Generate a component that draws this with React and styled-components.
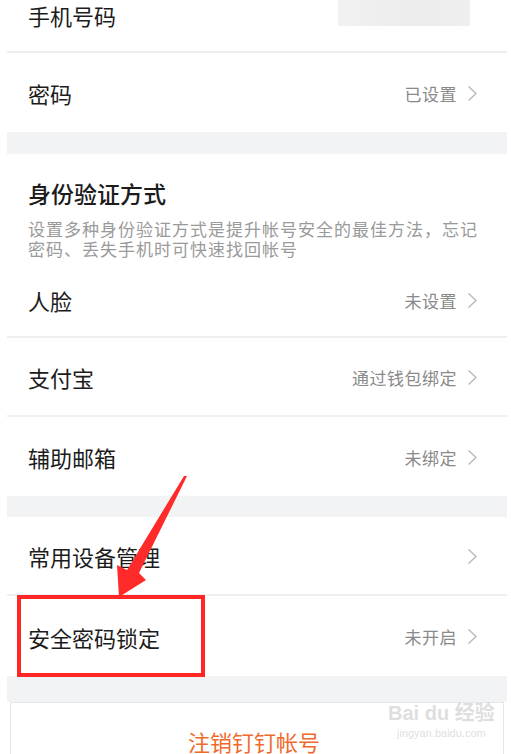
import React from 'react';
import styled, { createGlobalStyle } from 'styled-components';

const GlobalStyle = createGlobalStyle`
    html, body {
        margin: 0;
        padding: 0;
        background: #fff;
        font-family: "Noto Sans CJK SC", "Noto Sans", sans-serif;
        overflow: hidden;
    }
`;

const Screen = styled.div`
    position: relative;
    width: 511px;
    height: 754px;
    overflow: hidden;
    background: #fff;
`;

const Page = styled.div`
    margin-left: 7px;
    width: 500px;
`;

const Group = styled.section`
    background: #fff;
`;

const Band = styled.div`
    height: ${p => p.h || 22}px;
    background: #f2f3f5;
`;

const Row = styled.div`
    display: flex;
    align-items: ${p => (p.top ? 'flex-start' : 'center')};
    justify-content: space-between;
    height: ${p => p.h || 79}px;
    box-sizing: border-box;
    padding: ${p => (p.top ? '0' : '1px')} 29px 0 21px;
    border-bottom: ${p => (p.last ? 'none' : '2px solid #efefef')};
`;

const Label = styled.span`
    font-size: 22px;
    line-height: 30px;
    color: #1c1c1c;
`;

const Value = styled.span`
    display: flex;
    align-items: center;
    gap: 10px;
    font-size: 17px;
    letter-spacing: 0.5px;
    color: #8a8a8a;
`;

const Masked = styled.div`
    width: 132px;
    height: 26px;
    margin-right: 8px;
    background: linear-gradient(90deg, #f1f1f1, #ececec 60%, #efefef);
`;

const Intro = styled.div`
    padding: 24px 29px 4px 21px;
`;

const Title = styled.h3`
    margin: 0;
    font-size: 23px;
    line-height: 30px;
    font-weight: 500;
    color: #1c1c1c;
`;

const Desc = styled.p`
    margin: 11px 0 0;
    font-size: 17px;
    line-height: 20px;
    letter-spacing: 1px;
    color: #9a9a9a;
`;

const LogoutCard = styled.div`
    margin: 0 3px;
    height: 70px;
    border: 1px solid #e6e6e6;
    border-bottom: none;
    display: flex;
    justify-content: center;
    padding-top: 23px;
    box-sizing: border-box;
`;

const LogoutText = styled.span`
    font-size: 22px;
    line-height: 30px;
    color: #f06a2c;
    margin-left: -6px;
`;

const Highlight = styled.div`
    position: absolute;
    left: 17px;
    top: 595px;
    width: 188px;
    height: 82px;
    box-sizing: border-box;
    border: 4px solid #ff2626;
`;

const Arrow = styled.svg`
    position: absolute;
    left: 0;
    top: 0;
    pointer-events: none;
`;

const Watermark = styled.div`
    position: absolute;
    left: 388px;
    top: 700px;
    display: flex;
    flex-direction: column;
    align-items: center;
    white-space: nowrap;
    color: rgba(200, 200, 200, 0.6);
    font-family: "Liberation Sans", "Noto Sans CJK SC", sans-serif;
`;

const MarkLogo = styled.span`
    font-size: 20px;
    font-weight: 700;
    line-height: 26px;
`;

const MarkUrl = styled.span`
    font-size: 11px;
    line-height: 14px;
`;

function Chevron() {
    return (
        <svg width="11" height="17" viewBox="0 0 11 17">
            <path d="M1.5 1.5 L9 8.5 L1.5 15.5" fill="none" stroke="#b9b9b9" strokeWidth="1.4" />
        </svg>
    );
}

function Item({ label, value, h, last }) {
    return (
        <Row h={h} last={last}>
            <Label>{label}</Label>
            <Value>
                {value}
                <Chevron />
            </Value>
        </Row>
    );
}

export default function App() {
    return (
        <Screen>
            <GlobalStyle />
            <Page>
                <Group>
                    <Row top h={53}>
                        <Label>手机号码</Label>
                        <Masked />
                    </Row>
                    <Item label="密码" value="已设置" last />
                </Group>

                <Band />

                <Group>
                    <Intro>
                        <Title>身份验证方式</Title>
                        <Desc>设置多种身份验证方式是提升帐号安全的最佳方法，忘记密码、丢失手机时可快速找回帐号</Desc>
                    </Intro>
                    <Item label="人脸" value="未设置" h={75} />
                    <Item label="支付宝" value="通过钱包绑定" />
                    <Item label="辅助邮箱" value="未绑定" last />
                </Group>

                <Band h={21} />

                <Group>
                    <Item label="常用设备管理" value="" />
                    <Item label="安全密码锁定" value="未开启" h={80} last />
                </Group>

                <Band h={26} />

                <LogoutCard>
                    <LogoutText>注销钉钉帐号</LogoutText>
                </LogoutCard>
            </Page>

            <Highlight />
            <Arrow width="511" height="754" viewBox="0 0 511 754">
                <polygon
                    points="187,476 139,573 146,580 119,597 117,565 127,570 184,476"
                    fill="#ff2a2a"
                />
            </Arrow>

            <Watermark>
                <MarkLogo>Bai du 经验</MarkLogo>
                <MarkUrl>jingyan.baidu.com</MarkUrl>
            </Watermark>
        </Screen>
    );
}
